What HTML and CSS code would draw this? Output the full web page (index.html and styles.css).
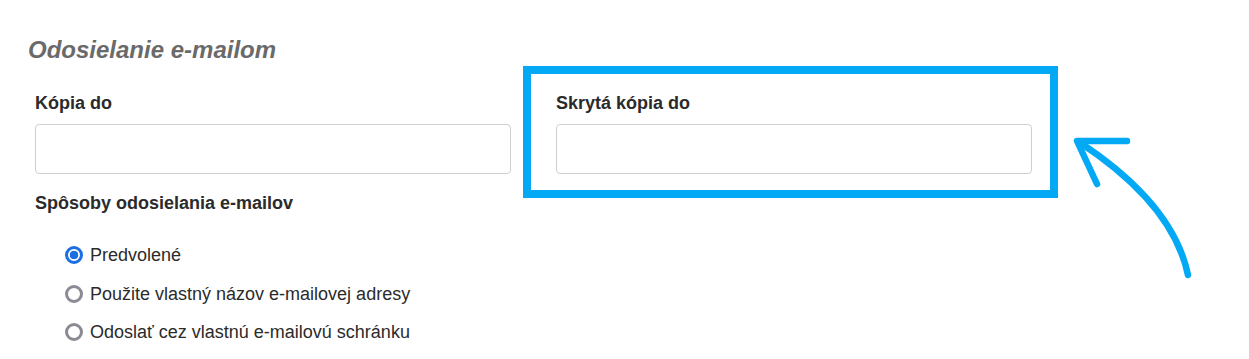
FILE: index.html
```html
<!DOCTYPE html>
<html lang="sk">
<head>
    <meta charset="UTF-8">
    <meta name="viewport" content="width=device-width, initial-scale=1.0">
    <title>Odosielanie e-mailom</title>
    <link rel="stylesheet" href="styles.css">
</head>
<body>
    <div class="panel">
        <h2 class="section-title">Odosielanie e-mailom</h2>
        <div class="fields">
            <div class="form-group">
                <label for="cc">Kópia do</label>
                <input type="text" id="cc" name="cc">
            </div>
            <div class="form-group highlighted">
                <label for="bcc">Skrytá kópia do</label>
                <input type="text" id="bcc" name="bcc">
                <span class="highlight-box"></span>
                <svg class="hint-arrow" width="130" height="160" viewBox="0 0 130 160" aria-hidden="true">
                    <path d="M118 143 C108 95 70 50 9 10" fill="none" stroke="#03a9f4" stroke-width="6.5" stroke-linecap="round"/>
                    <path d="M57 9 L7 9 L27 52" fill="none" stroke="#03a9f4" stroke-width="6.5" stroke-linecap="round" stroke-linejoin="round"/>
                </svg>
            </div>
        </div>
        <div class="send-methods">
            <div class="group-label">Spôsoby odosielania e-mailov</div>
            <label class="radio-row">
                <input type="radio" name="send_method" value="default" checked>
                <span>Predvolené</span>
            </label>
            <label class="radio-row">
                <input type="radio" name="send_method" value="alias">
                <span>Použite vlastný názov e-mailovej adresy</span>
            </label>
            <label class="radio-row">
                <input type="radio" name="send_method" value="mailbox">
                <span>Odoslať cez vlastnú e-mailovú schránku</span>
            </label>
        </div>
    </div>
</body>
</html>
```

FILE: styles.css
```css
:root {
    --accent-color: #03a9f4;
    --text-color: #2b2b2b;
    --muted-color: #6a6a6a;
    --border-color: #cfcfcf;
    --radio-color: #1a6fe3;
    --radio-off: #8b8b95;
}
body {
    font-family: 'Liberation Sans', Arial, sans-serif;
    color: var(--text-color);
    background-color: #fff;
    margin: 0;
    padding: 0;
}
.panel {
    padding: 36px 0 0 35px;
}
.section-title {
    margin: 0 0 28px -7px;
    font-size: 24px;
    line-height: 28px;
    font-style: italic;
    font-weight: bold;
    color: var(--muted-color);
}
.fields {
    display: grid;
    grid-template-columns: 476px 476px;
    column-gap: 45px;
}
.form-group label,
.group-label {
    display: block;
    font-size: 18px;
    line-height: 22px;
    font-weight: bold;
    margin-bottom: 10px;
}
.form-group input {
    display: block;
    box-sizing: border-box;
    width: 100%;
    height: 50px;
    padding: 6px 12px;
    border: 1px solid var(--border-color);
    border-radius: 4px;
    font-size: 16px;
    font-family: inherit;
    outline: none;
}
.highlighted {
    position: relative;
}
.highlight-box {
    position: absolute;
    top: -26px;
    left: -33px;
    right: -26px;
    bottom: -24px;
    border: 8px solid var(--accent-color);
    pointer-events: none;
}
.hint-arrow {
    position: absolute;
    left: 514px;
    top: 40px;
}
.send-methods {
    margin-top: 18px;
}
.group-label {
    margin-bottom: 30px;
}
.radio-row {
    display: flex;
    align-items: center;
    gap: 7px;
    margin-left: 30px;
    margin-bottom: 16.5px;
    font-size: 18px;
    line-height: 22px;
}
.radio-row input {
    appearance: none;
    box-sizing: border-box;
    width: 18px;
    height: 18px;
    margin: 0;
    border: 3px solid var(--radio-off);
    border-radius: 50%;
    background-color: #fff;
}
.radio-row input:checked {
    border-color: var(--radio-color);
    background: radial-gradient(circle, var(--radio-color) 0 4px, #fff 4.6px);
}
```
